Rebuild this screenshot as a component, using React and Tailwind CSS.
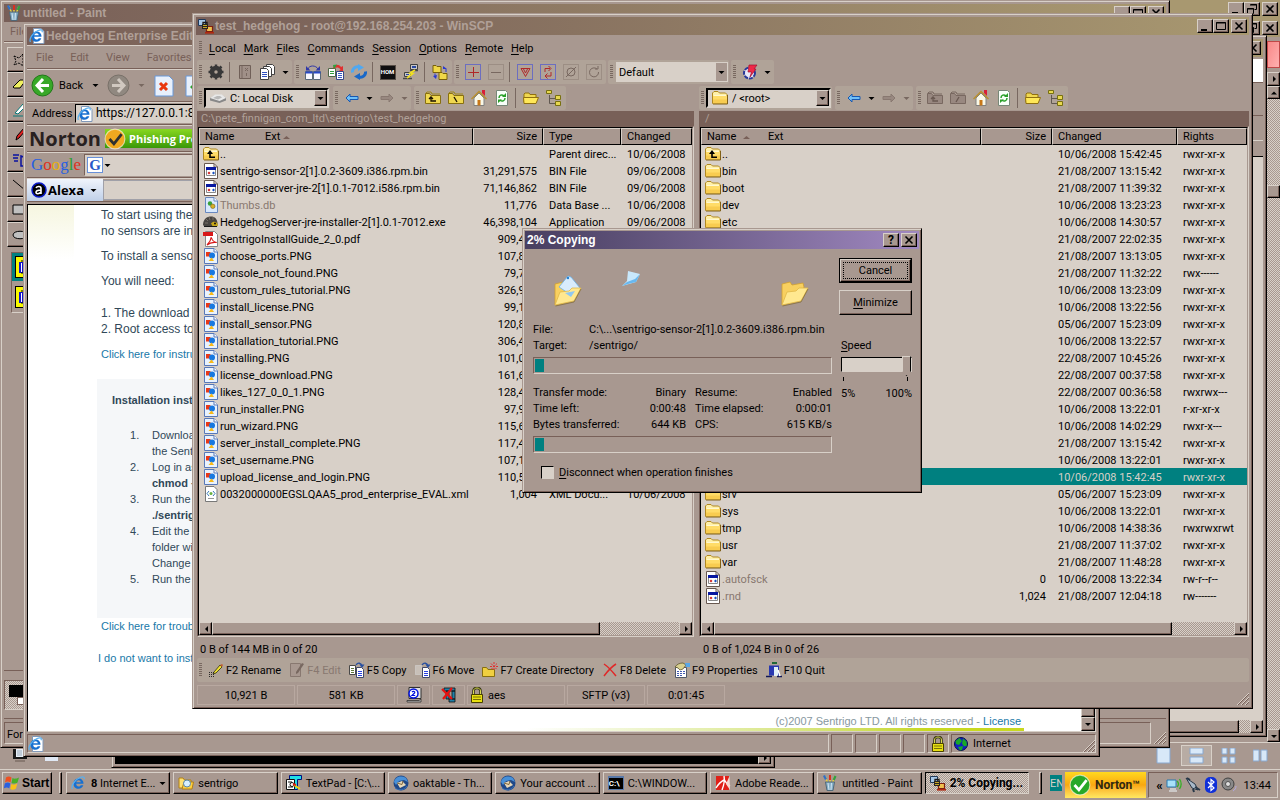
import { useState } from 'react'

// 共通のクラス
const raised =
  'border border-t-[#d8d0c8] border-l-[#d8d0c8] border-r-black border-b-black bg-[#a89890] shadow-[inset_-1px_-1px_#786058]'
const sunken = 'border border-t-[#786058] border-l-[#786058] border-r-[#d8d0c8] border-b-[#d8d0c8]'
const frame =
  'absolute flex flex-col border border-t-[#a89890] border-l-[#a89890] border-r-black border-b-black bg-[#a89890] shadow-[inset_1px_1px_#d8d0c8,inset_-1px_-1px_#786058]'
const checker =
  'bg-[repeating-conic-gradient(#d8d0c8_0_25%,#a89890_0_50%)] bg-[length:2px_2px]'

/* ---------- icons ---------- */

const I = ({ children, size = 16, box = 16, className = '' }) => (
  <svg
    width={size}
    height={size}
    viewBox={`0 0 ${box} ${box}`}
    className={`shrink-0 ${className}`}
    fill="none"
    aria-hidden="true"
  >
    {children}
  </svg>
)

const Folder = ({ up = false }) => (
  <I>
    <path d="M.5 13.500v-10.500l1.500-1.500h4l1.500 1.500h6l1.500 1.500v9z" fill="#fff0a8" stroke="#b08820" />
    <path d="M1 5.500h14v8H1z" fill="#ffdc68" />
    <path d="M1.500 5.500h12.500" stroke="#fff8d0" />
    <path d="M1 9.500h14v4H1z" fill="#f8cc50" />
    <path d="M1 14h14.500V5" stroke="#806018" />
    {up && <path d="M4 8l3-4 3 4H7.800v2.500H12V12H6.200V8z" fill="#000" />}
  </I>
)

const BinFile = () => (
  <I>
    <path d="M1.500.5h9.500l3.500 3.500v11.500h-13z" fill="#fff" stroke="#685850" />
    <path d="M11 .5V4h3.500" stroke="#685850" />
    <path d="M3.500 4.500h9v8h-9z" fill="#fff" stroke="#888" />
    <path d="M3 4h10v3H3z" fill="#0818a0" />
    <path d="M4.500 10L6 8.500 7.500 10 6 11.500z" fill="#d02020" />
    <path d="M9 10l1.500-1.500L12 10l-1.500 1.500z" fill="#1850c0" />
  </I>
)

const PngFile = () => (
  <I>
    <path d="M1.500.5h9.500l3.500 3.500v11.500h-13z" fill="#e8f2fe" stroke="#5878b8" />
    <path d="M11 .5V4h3.500" fill="#fff" stroke="#5878b8" />
    <path d="M3 4h4.500v4.500H3z" fill="#e83818" />
    <circle cx="9" cy="7.500" r="3" fill="#1878e0" />
    <path d="M5.500 13l3-3.500 2.500 3.500z" fill="#f8b818" />
  </I>
)

const DbFile = () => (
  <I>
    <path d="M2.500.5h8.500l3.500 3.500v11.500h-12z" fill="#d8e8fc" stroke="#6888c0" />
    <path d="M11 .5V4h3.500" fill="#fff" stroke="#6888c0" />
    <circle cx="7" cy="6.500" r="2.200" fill="#38a038" />
    <circle cx="9.800" cy="9.300" r="2.200" fill="#d8b028" stroke="#706020" strokeWidth=".6" />
  </I>
)

const Hedgehog = () => (
  <I>
    <path d="M0 11C0 5 4 2.500 8 2.500S14 5 14.500 9v3H1z" fill="#484440" />
    <path d="M3 5l2 2M6 3l1 3M10 3v3M2 9h3" stroke="#787068" />
    <path d="M8 9.500c2-3 6-2 7 1l-1 2.500h-4z" fill="#c8a818" />
    <circle cx="12" cy="9.500" r="1" fill="#181008" />
    <path d="M1 12.500h13" stroke="#181818" />
  </I>
)

const PdfFile = ({ size = 16 }) => (
  <I size={size}>
    <path d="M2.500.5h9l3 3v12h-12z" fill="#fff" stroke="#888" />
    <path d="M0 1h10v4H0z" fill="#d81818" />
    <path d="M4 14c2-2 4-5 4.300-8 .5 3 2.500 5 5.500 5.500-3-.5-7 0-9.800 2.500" stroke="#d81818" strokeWidth="1.200" />
  </I>
)

const XmlFile = () => (
  <I>
    <path d="M2.500.5h8.500l3 3v12h-11.500z" fill="#fff" stroke="#787878" />
    <path d="M6 5L4 7.500 6 10M10 5l2 2.500-2 2.500" stroke="#3878b8" />
    <circle cx="8" cy="7.500" r="1.500" fill="#68b040" />
    <path d="M5 12.500h6" stroke="#999" />
  </I>
)

const fileIcons = {
  up: <Folder up />,
  dir: <Folder />,
  bin: <BinFile />,
  png: <PngFile />,
  db: <DbFile />,
  exe: <Hedgehog />,
  pdf: <PdfFile />,
  xml: <XmlFile />,
}

const Ie = ({ size = 16, page = false }) => (
  <I size={size}>
    {page && <path d="M4.500.5h7.500l3 3v12H4.500z" fill="#fff" stroke="#8098b8" />}
    <path
      d="M12.500 8.800H5.200c.1 1.700 1 2.700 2.400 2.700 1 0 1.700-.4 2.100-1.200h2.600c-.7 2.300-2.500 3.400-4.800 3.400-3 0-5-2-5-5s2-5.200 5-5.200 5.100 2 5 5.300zM5.300 7.300h4.500c-.2-1.300-1-2-2.200-2s-2.100.7-2.300 2z"
      fill="#1870d0"
    />
    <path d="M1.500 14C-.5 11 4 4.500 9 2.500c3-1.200 5-.8 4 1.700" stroke="#58b0f0" strokeWidth="1.200" />
  </I>
)

const PaintCup = () => (
  <I>
    <path d="M3 1l3 8M8 0v8M13 1l-3 8" stroke="#e8d040" strokeWidth="1.500" />
    <path d="M2 .5l2 4" stroke="#3070c8" strokeWidth="2.200" />
    <path d="M8 0v5" stroke="#d83020" strokeWidth="2" />
    <path d="M13.500 1l-1.800 4" stroke="#30a040" strokeWidth="2.200" />
    <path d="M3.500 7h9l-1.500 8.500H5z" fill="#88b0c8" stroke="#506878" />
    <path d="M6 8l1 7M9.500 8L9 15" stroke="#d0e4f0" />
  </I>
)

const WinScpIcon = () => (
  <I>
    <path d="M.5 1.500h7v6h-7z" fill="#a8c8e8" stroke="#203858" />
    <path d="M8.500 8.500h6v5h-6z" fill="#f0c050" stroke="#802010" strokeWidth="1.200" />
    <path d="M7 14.800h9" stroke="#b02810" strokeWidth="1.600" />
    <path d="M4 6h6v5H4z" fill="#282420" />
    <path d="M5 6V4.500h4V6" stroke="#181818" strokeWidth="1.300" />
    <path d="M5 7.500h4M5 9.500h4" stroke="#c8a828" />
  </I>
)

const Gear = () => (
  <I>
    <circle cx="8" cy="8" r="4" stroke="#383838" strokeWidth="4.500" />
    <path d="M8 .5v3M8 12.500v3M.5 8h3M12.500 8h3M2.500 2.500l2 2M11.500 11.500l2 2M13.500 2.500l-2 2M4.500 11.500l-2 2" stroke="#383838" strokeWidth="2.500" />
  </I>
)

const Book = () => (
  <I>
    <path d="M2.500 1.500h11v13h-11z" fill="#a09088" stroke="#706058" />
    <path d="M5 2v12M8 4l3 3M8 7l3-3M9.500 9v3" stroke="#786860" />
  </I>
)

const Pages = () => (
  <I>
    <path d="M6.500.5h6l2 2v8h-8z" fill="#fff" stroke="#404040" />
    <path d="M3.500 2.500h6l2 2v8h-8z" fill="#fff" stroke="#404040" />
    <path d="M.5 4.500h6l2 2v9h-8z" fill="#fff" stroke="#404040" />
    <path d="M2 8.500h5M2 10.500h5M2 12.500h5" stroke="#3050c0" />
  </I>
)

const SyncPanels = () => (
  <I>
    <path d="M.5 7.500h7v8h-7zM8.500 7.500h7v8h-7z" fill="#f8f8ff" stroke="#586878" />
    <path d="M.5 8.500h7M8.500 8.500h7" stroke="#2848c8" strokeWidth="2" />
    <path d="M3 5c1-4 8-4 10 0" stroke="#3038a8" />
    <path d="M1 2v4.500h4.500zM15 2v4.500h-4.500z" fill="#3038a8" />
  </I>
)

const ComparePages = () => (
  <I>
    <path d="M.5 4.500h7v8h-7z" fill="#fff" stroke="#506848" />
    <path d="M8.500 7.500h7v8h-7z" fill="#fff" stroke="#384888" />
    <path d="M10 9.500h4M10 11.500h4M10 13.500h4" stroke="#3858c8" />
    <path d="M2 7.500h4M2 9.500h4" stroke="#30a040" />
    <path d="M5 3c2-3 6-3 8 0l2-1v5h-4l1.500-1.500C10.500 3 8 3 6 5z" fill="#e03030" />
    <path d="M5 1l4-.5L6 5z" fill="#28a840" />
  </I>
)

const RefreshArrows = () => (
  <I>
    <path d="M1.500 8.500C1 5 4 2 8 3" stroke="#50a8f0" strokeWidth="3" />
    <path d="M14.500 7.500C15 11 12 14 8 13" stroke="#1868c8" strokeWidth="3" />
    <path d="M7 0l6 3.500L7 7z" fill="#50a8f0" />
    <path d="M9 16l-6-3.500L9 9z" fill="#1868c8" />
  </I>
)

const Console = () => (
  <span className="flex h-[15px] w-4 items-center justify-center border border-[#585048] bg-[#101010] text-[6px] font-bold leading-[8px] text-white">
    HOM
  </span>
)

const Putty = () => (
  <I>
    <path d="M7.500.5h7v5h-7zM1.500 8.500h6v4h-6z" fill="#c8c8c8" stroke="#404040" />
    <path d="M9 2h4v2H9zM3 10h3v1H3z" fill="#2848a0" />
    <path d="M7 6.500h8M0 14.500h9" stroke="#484848" strokeWidth="1.500" />
    <path d="M12 6L7 9l3 .5L4 14" stroke="#f0e020" strokeWidth="1.600" />
  </I>
)

const FolderSync = () => (
  <I>
    <path d="M1 1.500h3l1 1h4v6H1zM7 8.500h3l1 1h4v6H7z" fill="#f0d848" stroke="#786008" />
    <path d="M11 2l4 3h-4zM5 11L1 12l3 3z" fill="#2838d0" />
    <path d="M14 5v3M3 12V9.500" stroke="#2838d0" />
  </I>
)

const Dotted = ({ d, dim = false }) => (
  <I>
    <path d="M.5.5h15v15H.5z" stroke={dim ? '#887870' : '#2838e8'} strokeDasharray="1 1" />
    <path d={d} stroke={dim ? '#786860' : '#b02828'} />
  </I>
)

const BlueArrow = ({ right = false, dim = false }) => (
  <I className={right ? 'rotate-180' : ''}>
    <path
      d="M2 8l4-4v2.500h8v3H6V12z"
      fill={dim ? '#988880' : '#70c0f8'}
      stroke={dim ? '#887870' : '#1858b0'}
    />
  </I>
)

const ToolFolder = ({ d, dim = false }) => (
  <I>
    <path
      d="M.5 13.500v-10h4l1.500 2h9.500v8z"
      fill={dim ? '#988880' : '#f0d850'}
      stroke={dim ? '#786860' : '#887010'}
    />
    <path d="M1 3l1-1h4l1 2h8" stroke={dim ? '#786860' : '#a08818'} />
    <path d={d} stroke={dim ? '#685850' : '#181000'} strokeWidth="1.300" />
  </I>
)

const House = () => (
  <I>
    <path d="M3 8v7.500h10V8L8 3z" fill="#f8f8e8" stroke="#808080" />
    <path d="M.5 9L8 1.500 15.500 9" stroke="#b89030" strokeWidth="1.500" />
    <path d="M11 0h3v6l-3-3z" fill="#d82038" />
    <path d="M6.500 10h3v5.500h-3z" fill="#c87818" />
  </I>
)

const RefreshPage = () => (
  <I>
    <path d="M2.500.5h9l2 2v13h-11z" fill="#f8fff8" stroke="#788878" />
    <path d="M5 8c0-3 3-4 5-2M11 8c0 3-3 4-5 2" stroke="#28a028" strokeWidth="1.500" />
    <path d="M8 7h4V3zM8 9.500H4V13z" fill="#28a028" />
  </I>
)

const OpenFolder = () => (
  <I>
    <path d="M1 12V4l1-1h4l1 1.500h6V7" fill="#f0d850" stroke="#907010" />
    <path d="M1 13.500l-.5-6h15l-2.500 6z" fill="#ffe858" stroke="#907010" />
  </I>
)

const Tree = () => (
  <I>
    <path d="M3.500 5v8.500H9M3.500 8.500H9" stroke="#605850" />
    <path d="M.5.5h5v3h-5zM9.500 5.500h5v4h-5zM9.500 11.500h5v4h-5z" fill="#e8d850" stroke="#787010" />
  </I>
)

const Bolt = () => (
  <I>
    <circle cx="7.500" cy="9" r="5.500" fill="#e8e8f8" stroke="#283898" strokeWidth="2" strokeDasharray="4 1" />
    <path d="M7 1h8l-3 4h2l-6 8 1.500-5H6z" fill="#f02848" stroke="#a01030" strokeWidth=".7" />
  </I>
)

const Drive = () => (
  <I>
    <path d="M0 8l5-3h7l4 3v2.500L9.500 13 0 10.500z" fill="#888" />
    <path d="M0 8l5-3.500h7L16 8l-6.500 3z" fill="#e8e8e8" />
    <path d="M3 8l4-2h3l2 1.500-4 2z" fill="#b8b8b8" />
  </I>
)

const Pencil = () => (
  <I>
    <path d="M6 10l6-7 2 2-6 6-3 1z" fill="#f0e030" stroke="#303010" strokeWidth=".8" />
    <path d="M12 3l2 2 1-2-1-1z" fill="#c06030" />
    <path d="M1 10.500h5M1 12.500h5M1 14.500h5" stroke="#282828" strokeDasharray="1 1" />
  </I>
)

const EditDim = () => (
  <I>
    <path d="M1.500 1.500h10v13h-10z" fill="#a89890" stroke="#887870" />
    <path d="M7 10l6-9 2 1-6 9-2 1z" fill="#786860" />
  </I>
)

const CopyPages = ({ move = false }) => (
  <I>
    <path
      d="M.5 3.500h6v9h-6z"
      fill={move ? '#c8c0b8' : '#fff'}
      stroke={move ? '#d8d8d8' : '#484848'}
      strokeDasharray={move ? '1 1' : 'none'}
    />
    {!move && <path d="M2 6.500h3M2 8.500h3M2 10.500h3" stroke="#607838" />}
    <path d="M7.500 5.500h5l2 2v8h-7z" fill="#fff" stroke="#404868" />
    <path d="M9 9.500h4M9 11.500h4M9 13.500h4" stroke="#2840e0" />
    <path d="M7 3c2-3 5-2 6 1" stroke="#2850a0" strokeWidth="1.300" />
    <path d="M10.500 2.500h5L13 6z" fill="#2850a0" />
  </I>
)

const NewFolder = () => (
  <I>
    <path d="M.5 14.500v-9h4l1.500 2h6.500v7z" fill="#f0d040" stroke="#887010" />
    <path d="M12 0v9M8 4.500h8M9 1.500l6 6M15 1.500l-6 6" stroke="#e03030" strokeDasharray="2 1" />
  </I>
)

const RedCross = () => (
  <I>
    <path d="M2 2c3 2 8 7 12 12M14 2C9 5 5 10 2 14" stroke="#e02828" strokeWidth="1.500" />
  </I>
)

const Props = () => (
  <I>
    <path d="M1.500 5.500h11v10h-11z" fill="#fff" stroke="#505868" />
    <path d="M3 9.500h8M3 11.500h8M3 13.500h5" stroke="#4058b0" strokeDasharray="2 1" />
    <path d="M1 5c2-3 5-4 8-4l3 2-3 4-3 1-2-2z" fill="#d8d090" stroke="#504820" strokeWidth=".7" />
    <path d="M11 1h5v4h-4z" fill="#58a8e8" />
  </I>
)

const Door = () => (
  <I>
    <path d="M3 3.500h10v10H3z" fill="#2838b0" />
    <path d="M8 5h4v9H8z" fill="#e0f0f8" />
    <path d="M6 1h5" stroke="#206838" strokeWidth="2" />
    <path d="M0 14.500h6M11 14.500h5" stroke="#101858" strokeWidth="1.500" />
    <path d="M12 8l2 6" stroke="#fff" strokeWidth="1.500" />
  </I>
)

const Monitor = () => (
  <I>
    <path d="M3 .5h11l1 1v10H3z" fill="#e0e0e0" stroke="#303030" />
    <path d="M1 13.500h12l2-1.500v3H1z" fill="#c0c0c0" stroke="#303030" strokeWidth=".8" />
    <circle cx="7.500" cy="6.500" r="4.500" fill="#fff" stroke="#0010e0" strokeWidth="1.500" />
    <path d="M6 5c1-1.200 3-.8 2.800.7L6 8.500h3.200" stroke="#0010e0" strokeWidth="1.200" />
  </I>
)

const Compression = () => (
  <I>
    <path d="M3 1h11v3H3zM5 4h3v8H5zM11 4h3v8h-3zM8 12h6v3H8z" fill="#2080a8" stroke="#101010" strokeWidth=".8" />
    <path d="M1 2l10 10M11 1L2 12" stroke="#e81010" strokeWidth="2.200" />
  </I>
)

const Lock = () => (
  <I>
    <path d="M4.500 8V4c0-4 7-4 7 0v4" stroke="#303010" strokeWidth="2.500" />
    <path d="M4.500 8V4c0-4 7-4 7 0v4" stroke="#d8d850" />
    <path d="M2.500 7.500h11v8h-11z" fill="#e8e010" stroke="#484000" />
    <path d="M4 10h8M4 12.500h8" stroke="#787008" />
  </I>
)

const Globe = () => (
  <I>
    <circle cx="8" cy="8" r="6.500" fill="#1020c0" stroke="#081048" />
    <path d="M2.500 5l4-3 2.500 3-3 4-3-1zM10 2.500l3.500 3 .5 4-3 1-2-3zM5 11l5-1-1 4-2 .5z" fill="#18a828" />
  </I>
)

const Flag = () => (
  <I>
    <path d="M2 2.500C4 1 6 1.500 7.500 2.500L6.500 7.500C5 6.500 3 6 1 7.500z" fill="#f05020" />
    <path d="M8.500 3C10 4 12 4 15 2.500l-1.500 5C12 8.500 9.500 9 7.500 8z" fill="#48b028" />
    <path d="M.8 8.500C3 7 5 7.500 6.300 8.500l-1 5C4 12.500 2 12-.2 13.500z" fill="#2860e0" />
    <path d="M7.300 9c2 1 4 .8 6-.5l-1.300 5c-2 1.500-4 1.500-5.700.5z" fill="#f8c018" />
  </I>
)

const TextPadIcon = () => (
  <I>
    <path d="M3.500.5h12v4h-4v10h-4v-10h-4z" fill="#20e0e8" stroke="#001080" />
    <path d="M.5 4.500h8v10h-8z" fill="#fff" stroke="#101010" />
    <path d="M2 7h4M2 12h5" stroke="#181818" />
    <circle cx="6" cy="9.500" r="2" stroke="#101010" />
    <path d="M8 10l6 4" stroke="#f0d010" strokeWidth="2" />
    <path d="M7 9l3 1" stroke="#e02010" strokeWidth="2" />
  </I>
)

const Thunderbird = () => (
  <I>
    <circle cx="8" cy="8" r="7.500" fill="#204888" />
    <path d="M1 7C2 2 8 0 13 3l2 4-4-2-5 1-3 4z" fill="#4890d8" />
    <path d="M4 8l5-2 4 4-6 3z" fill="#e8d8b8" />
    <path d="M4 8l5 1.500L10 6" stroke="#806840" />
    <path d="M2 13c4 3 10 2 12-2" stroke="#3870b8" />
  </I>
)

const Cmd = () => (
  <span className="flex h-[14px] w-4 shrink-0 items-center border border-t-2 border-[#5878a8] bg-black text-[8px] font-bold leading-[9px] text-white">
    C:\
  </span>
)

const Adobe = () => (
  <I>
    <path d="M1 1h13v14H1z" fill="#e02018" />
    <path d="M9 1c1 5 0 9-2 14M9 4c2 4 4 6 6 7M1 13c3-5 6-7 8-8" stroke="#fff" strokeWidth="1.400" />
    <path d="M14.500 1l.5 14-4-6z" fill="#f8d8d0" />
  </I>
)

const ExplorerIcon = () => (
  <I>
    <path d="M1 13V3h4l1.500 2H13v8z" fill="#ffe070" stroke="#b08018" />
    <path d="M4 14l2-7h9.500L14 14z" fill="#ffd040" stroke="#b08018" />
    <circle cx="9" cy="8.500" r="3.500" fill="#d8f0ff" stroke="#5888a8" />
  </I>
)

const Tick = ({ fill, stroke = '#fff', size = 20 }) => (
  <I size={size} box={20}>
    <circle cx="10" cy="10" r="9" fill={fill} stroke="#fff" strokeOpacity=".6" />
    <path d="M5 10l4 4.500L16 5.500" stroke={stroke} strokeWidth="2.500" />
  </I>
)

const Caret = ({ dim = false }) => (
  <I size={7} box={7}>
    <path d="M.5 2h6L3.500 5z" fill={dim ? '#786860' : '#000'} />
  </I>
)

const glyphs = {
  min: <path d="M2 9h6v2H2z" fill="#000" />,
  max: <path d="M1.500 2.500h9v7h-9zM1 3h10" stroke="#000" />,
  restore: <path d="M4.500 1.500h6v5h-2M4 2h7M1.500 5.500h6v5h-6zM1 6h7" stroke="#000" />,
  close: <path d="M2.500 2.500l7 7M9.500 2.500l-7 7" stroke="#000" strokeWidth="1.600" />,
}

const arrows = {
  left: 'M6 1v6L3 4z',
  right: 'M3 1v6l3-3z',
  up: 'M1 5.500h6l-3-3z',
  down: 'M1 3h6L4 6z',
}

/* ---------- building blocks ---------- */

const CaptionButton = ({ kind }) => (
  <button
    type="button"
    aria-label={kind}
    className={`flex h-[14px] w-4 shrink-0 items-center justify-center text-[12px] font-bold leading-none ${raised}`}
  >
    {kind === 'help' ? '?' : <I size={12} box={12}>{glyphs[kind]}</I>}
  </button>
)

const CaptionButtons = ({ middle = 'max' }) => (
  <div className="flex shrink-0">
    <CaptionButton kind="min" />
    <CaptionButton kind={middle} />
    <span className="w-[2px]" />
    <CaptionButton kind="close" />
  </div>
)

const TitleBar = ({ icon, children, middle }) => (
  <header className="flex h-[18px] shrink-0 items-center bg-linear-to-r from-[#785f58] to-[#a89870] pr-[2px] pl-[2px]">
    {icon}
    <h2 className="min-w-0 flex-1 truncate pl-px font-['Liberation_Sans',Arial,sans-serif] text-[12px] leading-[16px] font-bold text-[#b0a098]">
      {children}
    </h2>
    <CaptionButtons middle={middle} />
  </header>
)

const ArrowButton = ({ dir, className = 'h-[13px] w-[13px]' }) => (
  <button
    type="button"
    aria-label={dir}
    className={`flex shrink-0 items-center justify-center ${raised} ${className}`}
  >
    <I size={8} box={8}>
      <path d={arrows[dir]} fill="#000" />
    </I>
  </button>
)

const HScroll = ({ thumb }) => (
  <div className={`flex h-[13px] shrink-0 ${checker}`}>
    <ArrowButton dir="left" />
    <div className="flex min-w-0 flex-1">
      <div className={raised} style={{ width: `${thumb}%` }} />
    </div>
    <ArrowButton dir="right" />
  </div>
)

const Grip = () => (
  <span className="mr-[2px] ml-[2px] h-[14px] w-[3px] shrink-0 bg-[repeating-linear-gradient(#786860_0_1px,transparent_1px_2px)]" />
)

const Segment = ({ children }) => (
  <div className="flex h-6 shrink-0 items-center rounded-[2px] bg-[#b0a398] pr-px">
    <Grip />
    {children}
  </div>
)

const Tool = ({ label, children }) => (
  <button type="button" aria-label={label} className="flex h-[22px] w-[23px] items-center justify-center">
    {children}
  </button>
)

const Drop = ({ dim = false }) => (
  <button type="button" aria-label="More" className="flex h-[22px] w-3 items-center justify-center">
    <Caret dim={dim} />
  </button>
)

const Sep = () => <span className="mx-[2px] h-[20px] w-[2px] border-l border-[#786860]" />

const Combo = ({ label, icon, text }) => (
  <label className="relative flex h-[20px] w-[125px] items-center border-2 border-t-black border-l-black border-r-[#d8d0c8] border-b-[#d8d0c8] bg-[#d8d0c8] pl-1">
    {icon}
    <select aria-label={label} className="h-4 min-w-0 flex-1 appearance-none bg-transparent pl-1 text-black outline-none">
      <option>{text}</option>
    </select>
    <span className={`pointer-events-none flex h-4 w-[13px] items-center justify-center ${raised}`}>
      <Caret />
    </span>
  </label>
)

/* ---------- WinSCP ---------- */

const png = (name, size) => ['png', `${name}.PNG`, size, '', '']

const localFiles = [
  ['up', '..', '', 'Parent direc...', '10/06/2008'],
  ['bin', 'sentrigo-sensor-2[1].0.2-3609.i386.rpm.bin', '31,291,575', 'BIN File', '09/06/2008'],
  ['bin', 'sentrigo-server-jre-2[1].0.1-7012.i586.rpm.bin', '71,146,862', 'BIN File', '09/06/2008'],
  ['db', 'Thumbs.db', '11,776', 'Data Base ...', '10/06/2008'],
  ['exe', 'HedgehogServer-jre-installer-2[1].0.1-7012.exe', '46,398,104', 'Application', '09/06/2008'],
  ['pdf', 'SentrigoInstallGuide_2_0.pdf', '909,412', '', ''],
  png('choose_ports', '107,812'),
  png('console_not_found', '79,702'),
  png('custom_rules_tutorial', '326,910'),
  png('install_license', '99,120'),
  png('install_sensor', '120,834'),
  png('installation_tutorial', '306,420'),
  png('installing', '101,012'),
  png('license_download', '161,604'),
  png('likes_127_0_0_1', '128,440'),
  png('run_installer', '97,904'),
  png('run_wizard', '115,602'),
  png('server_install_complete', '117,408'),
  png('set_username', '107,110'),
  png('upload_license_and_login', '110,520'),
  ['xml', '0032000000EGSLQAA5_prod_enterprise_EVAL.xml', '1,004', 'XML Docu...', '10/06/2008'],
]

const rx = 'rwxr-xr-x'
const remoteFiles = [
  ['up', '..', '', '10/06/2008 15:42:45', rx],
  ['dir', 'bin', '', '21/08/2007 13:15:42', rx],
  ['dir', 'boot', '', '21/08/2007 11:39:32', rx],
  ['dir', 'dev', '', '10/06/2008 13:23:23', rx],
  ['dir', 'etc', '', '10/06/2008 14:30:57', rx],
  ['dir', '', '', '21/08/2007 22:02:35', rx],
  ['dir', '', '', '21/08/2007 13:13:05', rx],
  ['dir', '', '', '21/08/2007 11:32:22', 'rwx------'],
  ['dir', '', '', '10/06/2008 13:23:09', rx],
  ['dir', '', '', '10/06/2008 13:22:56', rx],
  ['dir', '', '', '05/06/2007 15:23:09', rx],
  ['dir', '', '', '10/06/2008 13:22:57', rx],
  ['dir', '', '', '22/08/2007 10:45:26', rx],
  ['dir', '', '', '22/08/2007 00:37:58', rx],
  ['dir', '', '', '22/08/2007 00:36:58', 'rwxrwx---'],
  ['dir', '', '', '10/06/2008 13:22:01', 'r-xr-xr-x'],
  ['dir', '', '', '10/06/2008 14:02:29', 'rwxr-x---'],
  ['dir', '', '', '21/08/2007 13:15:42', rx],
  ['dir', '', '', '10/06/2008 13:22:01', rx],
  ['dir', '', '', '10/06/2008 15:42:45', rx],
  ['dir', 'srv', '', '05/06/2007 15:23:09', rx],
  ['dir', 'sys', '', '10/06/2008 13:22:01', rx],
  ['dir', 'tmp', '', '10/06/2008 14:38:36', 'rwxrwxrwt'],
  ['dir', 'usr', '', '21/08/2007 11:37:02', rx],
  ['dir', 'var', '', '21/08/2007 11:48:28', rx],
  ['bin', '.autofsck', '0', '10/06/2008 13:22:34', 'rw-r--r--'],
  ['bin', '.rnd', '1,024', '21/08/2007 12:04:18', 'rw-------'],
]

const dimmed = ['Thumbs.db', '.autofsck', '.rnd']

const th =
  'h-[17px] truncate border border-t-[#d8d0c8] border-l-[#d8d0c8] border-r-black border-b-black bg-[#a89890] px-[5px] text-left font-normal'

const SortMark = () => (
  <I size={7} box={7} className="inline">
    <path d="M0 5h7L3.500 2z" fill="#786058" />
  </I>
)

function FileTable({ files, columns, ext, selected, thumb }) {
  return (
    <div className="flex min-h-0 flex-1 flex-col border border-t-[#786058] border-l-[#786058] border-r-[#d8d0c8] border-b-[#d8d0c8]">
      <div className="flex min-h-0 flex-1 flex-col border border-t-black border-l-black border-r-[#a89890] border-b-[#a89890] bg-[#d8d0c8]">
        <div className="min-h-0 flex-1 overflow-hidden">
          <table className="w-full table-fixed border-separate border-spacing-0">
            <thead>
              <tr>
                <th className={th}>
                  <span className={`inline-block ${ext ? 'w-[60px]' : 'w-[36px]'}`}>Name</span>
                  {ext ? 'Ext ' : ''}
                  <SortMark />
                  {ext ? '' : <span className="pl-[18px]">Ext</span>}
                </th>
                {columns.map(([name, width, right]) => (
                  <th key={name} className={`${th} ${width} ${right ? '!text-right' : ''}`}>
                    {name}
                  </th>
                ))}
              </tr>
            </thead>
            <tbody>
              {files.map(([icon, name, ...cells], row) => (
                <tr key={row} className={row === selected ? 'bg-[#008080] text-[#d8d0c8]' : ''}>
                  <td className="h-[17px] p-0">
                    <div className="flex h-[17px] items-center gap-px pl-1 whitespace-nowrap">
                      {fileIcons[icon]}
                      <span className={`pt-px ${dimmed.includes(name) ? 'text-[#887870]' : ''}`}>{name}</span>
                    </div>
                  </td>
                  {cells.map((cell, i) => (
                    <td
                      key={i}
                      className={`h-[17px] overflow-hidden px-[6px] pt-px pb-0 whitespace-nowrap ${i === 0 ? 'text-right' : ''}`}
                    >
                      {cell}
                    </td>
                  ))}
                </tr>
              ))}
            </tbody>
          </table>
        </div>
        <HScroll thumb={thumb} />
      </div>
    </div>
  )
}

function NavTools({ label, icon, text, dim = false }) {
  return (
    <div className="flex h-6 shrink-0 gap-[3px]">
      <Segment>
        <Combo label={label} icon={icon} text={text} />
      </Segment>
      <Segment>
        <Tool label="Back"><BlueArrow /></Tool>
        <Drop />
        <Tool label="Forward"><BlueArrow right dim /></Tool>
        <Drop dim />
      </Segment>
      <Segment>
        <Tool label="Parent directory"><ToolFolder dim={dim} d="M4 9l2-2 2 2M6 7v4h5" /></Tool>
        <Tool label="Root directory"><ToolFolder dim={dim} d={dim ? 'M9 7l-3 5' : 'M6 7l3 5'} /></Tool>
        <Tool label="Home directory"><House /></Tool>
        <Tool label="Refresh"><RefreshPage /></Tool>
        <Sep />
        <Tool label="Open directory"><OpenFolder /></Tool>
        <Tool label="Tree"><Tree /></Tool>
      </Segment>
    </div>
  )
}

const menus = ['Local', 'Mark', 'Files', 'Commands', 'Session', 'Options', 'Remote', 'Help']

const keys = [
  ['F2 Rename', <Pencil />],
  ['F4 Edit', <EditDim />],
  ['F5 Copy', <CopyPages />],
  ['F6 Move', <CopyPages move />],
  ['F7 Create Directory', <NewFolder />],
  ['F8 Delete', <RedCross />],
  ['F9 Properties', <Props />],
  ['F10 Quit', <Door />],
]

const panel = 'flex h-5 items-center justify-center border border-[#b8a8a0]'

const SizeGrip = () => (
  <I size={13} box={13} className="self-end">
    <path d="M1 13L13 1M5 13l8-8M9 13l4-4" stroke="#d8d0c8" />
    <path d="M2 13L13 2M6 13l7-7M10 13l3-3" stroke="#786058" />
  </I>
)

function WinScp() {
  return (
    <section className={`${frame} top-[13px] right-[27px] bottom-[91px] left-[192px] p-[3px]`}>
      <TitleBar icon={<WinScpIcon />}>test_hedgehog - root@192.168.254.203 - WinSCP</TitleBar>
      <div className="flex min-h-0 flex-1 flex-col pl-px">
        <nav className="mt-px flex h-6 shrink-0 items-center">
          <Grip />
          {menus.map((m) => (
            <button key={m} type="button" className="pr-[3px] pl-[5px]">
              <span className="underline underline-offset-2">{m[0]}</span>
              {m.slice(1)}
            </button>
          ))}
        </nav>
        <div className="mb-[2px] flex h-6 shrink-0 gap-[2px]">
          <Segment>
            <Tool label="Preferences"><Gear /></Tool>
            <Sep />
            <Tool label="Bookmarks"><Book /></Tool>
            <Tool label="Queue"><Pages /></Tool>
            <Drop />
          </Segment>
          <Segment>
            <Tool label="Synchronize browsing"><SyncPanels /></Tool>
            <Tool label="Compare directories"><ComparePages /></Tool>
            <Tool label="Synchronize"><RefreshArrows /></Tool>
            <Sep />
            <Tool label="Console"><Console /></Tool>
            <Tool label="Open in PuTTY"><Putty /></Tool>
            <Sep />
            <Tool label="Keep up to date"><FolderSync /></Tool>
          </Segment>
          <Segment>
            <Tool label="Select"><Dotted d="M8.500 3v10M3 8.500h11" /></Tool>
            <Tool label="Unselect"><Dotted dim d="M3 8.500h10" /></Tool>
            <Sep />
            <Tool label="Select all"><Dotted d="M4 4.500h9l-4.500 8zM6.500 5l2 4 2-4" /></Tool>
            <Tool label="Invert selection"><Dotted d="M5 8V4.500h5M8.500 2L11 4.500 8.500 7M11 8v4H6M7.500 9.500L5 12l2.500 2.500" /></Tool>
            <Tool label="Clear selection"><Dotted dim d="M4 8a4 4 0 108 0 4 4 0 10-8 0M3 13L13 3" /></Tool>
            <Tool label="Restore selection"><Dotted dim d="M11 5a4.500 4.500 0 101.500 3M9 5h3V2" /></Tool>
          </Segment>
          <Segment>
            <label className="ml-px flex h-5 w-[112px] items-center border border-[#d8d0c8] bg-[#d8d0c8]">
              <select aria-label="Transfer preset" className="h-4 min-w-0 flex-1 appearance-none bg-transparent pl-[2px] outline-none">
                <option>Default</option>
              </select>
              <span className="pointer-events-none flex h-[18px] w-[11px] items-center justify-center bg-[#a89890]">
                <Caret />
              </span>
            </label>
          </Segment>
          <Segment>
            <Tool label="Sessions"><Bolt /></Tool>
            <Drop />
          </Segment>
        </div>

        <div className="flex min-h-0 flex-1 gap-[5px]">
          <div className="flex min-w-0 flex-[497] flex-col">
            <NavTools label="Local drive" icon={<Drive />} text="C: Local Disk" />
            <p className="mt-px h-[15px] shrink-0 truncate bg-[#786058] pl-1 leading-[15px] text-[#b0a098]">
              C:\pete_finnigan_com_ltd\sentrigo\test_hedgehog
            </p>
            <FileTable
              files={localFiles}
              ext
              thumb={83}
              columns={[
                ['Size', 'w-[70px]', true],
                ['Type', 'w-[78px]'],
                ['Changed', 'w-[71px]'],
              ]}
            />
            <p className="h-[21px] shrink-0 pt-[6px] pl-[3px]">0 B of 144 MB in 0 of 20</p>
          </div>
          <div className="flex min-w-0 flex-[550] flex-col">
            <NavTools label="Remote directory" icon={<Folder />} text="/ <root>" dim />
            <p className="mt-px h-[15px] shrink-0 truncate bg-[#786058] pl-[6px] leading-[15px] text-[#b0a098]">/</p>
            <FileTable
              files={remoteFiles}
              selected={19}
              thumb={88}
              columns={[
                ['Size', 'w-[71px]', true],
                ['Changed', 'w-[125px]'],
                ['Rights', 'w-[70px]'],
              ]}
            />
            <p className="h-[21px] shrink-0 pt-[6px] pl-1">0 B of 1,024 B in 0 of 26</p>
          </div>
        </div>

        <div className="flex h-6 shrink-0 items-center rounded-[2px] bg-[#b0a398]">
          <Grip />
          {keys.map(([text, icon]) => (
            <button
              key={text}
              type="button"
              disabled={text === 'F4 Edit'}
              className="flex items-center gap-[2px] px-1 whitespace-nowrap disabled:text-[#887870]"
            >
              {icon}
              {text}
            </button>
          ))}
        </div>
        <footer className="mt-[3px] flex h-5 shrink-0 gap-[2px]">
          <span className={`${panel} w-[98px]`}>10,921 B</span>
          <span className={`${panel} w-[98px]`}>581 KB</span>
          <span className={`${panel} w-[33px]`}><Monitor /></span>
          <span className={`${panel} w-[33px]`}><Compression /></span>
          <span className={`${panel} w-[98px] !justify-start gap-[3px] pl-px`}><Lock />aes</span>
          <span className={`${panel} w-[78px]`}>SFTP (v3)</span>
          <span className={`${panel} w-[78px]`}>0:01:45</span>
          <span className="flex-1" />
          <SizeGrip />
        </footer>
      </div>
    </section>
  )
}

/* ---------- copy dialog ---------- */

const BigFolder = ({ sheet = false }) => (
  <svg width="28" height="32" viewBox="0 0 28 32" className="shrink-0" fill="none" aria-hidden="true">
    <path d="M1 30V9l8-2 2 3 11-2 1 4-5 14z" fill="#f8d060" stroke="#d0a030" strokeWidth=".8" />
    {sheet && <path d="M5 12l9-11 3 1 9 11-6 9z" fill="#d8ecfc" stroke="#68b0e8" strokeWidth=".8" />}
    {sheet && <circle cx="14" cy="3" r="1.200" fill="#2880d0" />}
    <path d="M1 30l5-13 9-1 3-3 9 0-7 13z" fill="#ffe890" stroke="#e0b848" strokeWidth=".8" />
    <path d="M1.500 31l18.500-4 7-13" stroke="#806830" strokeOpacity=".7" />
    {sheet && <path d="M11 18l10-2-4 6z" fill="#90c8f0" />}
  </svg>
)

const Progress = ({ label, value }) => (
  <div role="progressbar" aria-label={label} aria-valuenow={value} className={`h-[17px] p-px ${sunken}`}>
    <div className="h-[13px] bg-[#008080]" style={{ width: `${value + 1}%` }} />
  </div>
)

function CopyDialog() {
  const [disconnect, setDisconnect] = useState(false)
  const [speed, setSpeed] = useState(100)

  return (
    <section role="dialog" aria-label="2% Copying" className={`${frame} top-[228px] left-[522px] w-[400px] p-[2px]`}>
      <header className="flex h-[18px] items-center bg-linear-to-r from-[#483f60] to-[#a088c0] px-[2px]">
        <h2 className="flex-1 font-['Liberation_Sans',Arial,sans-serif] text-[12px] leading-4 font-bold text-white">2% Copying</h2>
        <CaptionButton kind="help" />
        <span className="w-[2px]" />
        <CaptionButton kind="close" />
      </header>
      <div className="flex gap-[7px] pt-[9px] pr-[7px] pb-[11px] pl-2">
        <div className="min-w-0 flex-1">
          <div className="flex h-[64px] items-start pt-[17px] pl-[21px]">
            <BigFolder sheet />
            <svg width="20" height="18" viewBox="0 0 20 18" className="-mt-1 ml-[39px]" aria-hidden="true">
              <path d="M7 0l12 3-4 8-14 4 5-5z" fill="#c8e8fc" />
              <path d="M1 15l6-2 8-2 4-8-5 5-8 3z" fill="#68b8f0" />
            </svg>
            <span className="flex-1" />
            <span className="mr-[23px]"><BigFolder /></span>
          </div>
          <dl className="grid grid-cols-[56px_1fr] leading-4">
            <dt>File:</dt>
            <dd>C:\...\sentrigo-sensor-2[1].0.2-3609.i386.rpm.bin</dd>
            <dt>Target:</dt>
            <dd>/sentrigo/</dd>
          </dl>
          <div className="mt-[3px]">
            <Progress label="File progress" value={2} />
          </div>
          <dl className="mt-[11px] mb-[3px] grid grid-cols-[93px_69px_74px_1fr] leading-4 [&>dd]:text-right">
            <dt>Transfer mode:</dt>
            <dd className="pr-[9px]">Binary</dd>
            <dt>Resume:</dt>
            <dd>Enabled</dd>
            <dt>Time left:</dt>
            <dd className="pr-[9px]">0:00:48</dd>
            <dt>Time elapsed:</dt>
            <dd>0:00:01</dd>
            <dt>Bytes transferred:</dt>
            <dd className="pr-[9px]">644 KB</dd>
            <dt>CPS:</dt>
            <dd>615 KB/s</dd>
          </dl>
          <Progress label="Total progress" value={2} />
          <label className="mt-[13px] flex items-center gap-[5px] pl-2">
            <input
              type="checkbox"
              checked={disconnect}
              onChange={(e) => setDisconnect(e.target.checked)}
              className="h-[13px] w-[13px] appearance-none border border-t-black border-l-black border-r-[#d8d0c8] border-b-[#d8d0c8] bg-[#d8d0c8] checked:bg-[#008080]"
            />
            <span>
              <span className="underline underline-offset-2">D</span>isconnect when operation finishes
            </span>
          </label>
        </div>
        <div className="w-[73px] shrink-0">
          <button type="button" className="flex h-[25px] w-full border border-black p-0">
            <span className={`flex h-full w-full items-center justify-center ${raised} p-[2px]`}>
              <span className="flex h-full w-full items-center justify-center border border-dotted border-black">
                Cancel
              </span>
            </span>
          </button>
          <button type="button" className={`mt-[7px] h-[25px] w-full ${raised}`}>
            <span className="underline underline-offset-2">M</span>inimize
          </button>
          <label className="mt-[23px] block pl-[2px] leading-4">
            <span className="underline underline-offset-2">S</span>peed
            <input
              type="range"
              min="5"
              max="100"
              value={speed}
              onChange={(e) => setSpeed(Number(e.target.value))}
              className="mt-[3px] block h-[15px] w-full appearance-none bg-transparent [&::-webkit-slider-runnable-track]:h-[15px] [&::-webkit-slider-runnable-track]:border [&::-webkit-slider-runnable-track]:border-t-black [&::-webkit-slider-runnable-track]:border-l-black [&::-webkit-slider-runnable-track]:border-r-[#d8d0c8] [&::-webkit-slider-runnable-track]:border-b-[#d8d0c8] [&::-webkit-slider-runnable-track]:bg-[#d8d0c8] [&::-webkit-slider-thumb]:-mt-[2px] [&::-webkit-slider-thumb]:h-5 [&::-webkit-slider-thumb]:w-[9px] [&::-webkit-slider-thumb]:appearance-none [&::-webkit-slider-thumb]:border [&::-webkit-slider-thumb]:border-t-[#d8d0c8] [&::-webkit-slider-thumb]:border-l-[#d8d0c8] [&::-webkit-slider-thumb]:border-r-black [&::-webkit-slider-thumb]:border-b-black [&::-webkit-slider-thumb]:bg-[#a89890] [&::-webkit-slider-thumb]:[clip-path:polygon(0_0,100%_0,100%_75%,50%_100%,0_75%)]"
            />
          </label>
          <div className="mt-[5px] flex justify-between px-1">
            <span className="h-1 w-px bg-black" />
            <span className="h-1 w-px bg-black" />
          </div>
          <div className="flex justify-between pt-[5px] pl-[2px] leading-4">
            <span>5%</span>
            <span>100%</span>
          </div>
        </div>
      </div>
    </section>
  )
}

/* ---------- Internet Explorer ---------- */

const bar = 'flex shrink-0 items-center border-t border-b border-t-[#d8d0c8] border-b-[#786058]'

const steps = [
  ['Download and install', 'the Sentrigo sensor'],
  ['Log in as root and run', <b>chmod +x</b>],
  ['Run the installer', <b>./sentrigo-sensor</b>],
  ['Edit the "sensor" file in', 'folder with the settings', 'Change the address'],
  ['Run the sensor'],
]

function Browser() {
  return (
    <section className={`${frame} top-[23px] right-[180px] bottom-[43px] left-[23px] p-[3px]`}>
      <TitleBar icon={<Ie page />}>Hedgehog Enterprise Edition - Windows Internet Explorer</TitleBar>
      <nav className={`${bar} h-[24px] gap-[17px] pl-[9px] text-[#786058]`}>
        {['File', 'Edit', 'View', 'Favorites'].map((m) => (
          <button key={m} type="button">{m}</button>
        ))}
      </nav>
      <div className={`${bar} h-[33px] pl-1`}>
        <button type="button" className="flex items-center gap-[5px]">
          <I size={23} box={23}>
            <circle cx="11.500" cy="11.500" r="10.500" fill="#38a828" stroke="#207818" />
            <path d="M12 5l-6 6.500L12 18M7 11.500h11" stroke="#fff" strokeWidth="3" />
          </I>
          Back
        </button>
        <span className="mr-2 ml-[9px]"><Caret /></span>
        <button type="button" aria-label="Forward">
          <I size={23} box={23}>
            <circle cx="11.500" cy="11.500" r="10.500" fill="#908880" stroke="#787068" />
            <path d="M11 5l6 6.500-6 6.500M16 11.500H5" stroke="#d0c8c0" strokeWidth="3" />
          </I>
        </button>
        <span className="mr-2 ml-2"><Caret dim /></span>
        <button type="button" aria-label="Stop">
          <I size={22} box={22}>
            <path d="M2 1h14l4 4v16H2z" fill="#e8f0fc" stroke="#6898d8" />
            <path d="M7 8l7 7M14 8l-7 7" stroke="#e83810" strokeWidth="3" />
          </I>
        </button>
        <button type="button" aria-label="Refresh" className="ml-[10px]">
          <I size={22} box={22}>
            <path d="M1 1h14l4 4v16H1z" fill="#e8f0fc" stroke="#6898d8" />
            <path d="M5 12l5-5v3h4v3H9v3z" fill="#28a028" />
          </I>
        </button>
      </div>
      <div className={`${bar} h-[23px] pl-[5px]`}>
        <label htmlFor="address" className="w-[43px]">Address</label>
        <div className="flex h-[19px] flex-1 items-center border border-t-black border-l-black border-r-[#d8d0c8] border-b-[#d8d0c8] bg-[#d8d0c8] pl-px">
          <Ie page />
          <input
            id="address"
            defaultValue="https://127.0.0.1:8443/console"
            className="min-w-0 flex-1 bg-transparent pl-[3px] text-[12px] outline-none"
          />
        </div>
      </div>
      <div className={`${bar} h-[27px] pl-[2px]`}>
        <span className="w-[76px] font-['Open_Sans',sans-serif] text-[20px] leading-6 font-bold text-[#282020]">Norton</span>
        <span className="relative flex h-[19px] w-[180px] items-center bg-linear-to-b from-[#88d820] to-[#389808] pl-[24px] font-['Open_Sans',sans-serif] text-[11px] font-bold whitespace-nowrap text-white">
          <span className="absolute -top-px -left-px"><Tick fill="#f0a820" stroke="#303030" size={22} /></span>
          Phishing Protection
        </span>
      </div>
      <div className={`${bar} h-[26px] pl-[4px]`}>
        <span className="w-[53px] font-['Liberation_Serif',serif] text-[17px] leading-5">
          <span className="text-[#2860e0]">G</span>
          <span className="text-[#e03020]">o</span>
          <span className="text-[#e8b010]">o</span>
          <span className="text-[#2860e0]">g</span>
          <span className="text-[#28a030]">l</span>
          <span className="text-[#e03020]">e</span>
        </span>
        <span className={`flex h-[22px] w-[120px] items-center gap-px bg-[#d8d0c8] pl-[2px] ${sunken}`}>
          <span className="flex h-4 w-4 items-center justify-center border border-[#6890d8] bg-white font-['Liberation_Serif',serif] text-[15px] leading-none font-bold text-[#2858c8]">
            G
          </span>
          <Caret />
        </span>
      </div>
      <div className={`${bar} h-[24px]`}>
        <span className="flex h-full w-[76px] items-center bg-linear-to-b from-[#f0f4fc] to-[#c0d0e8] pl-1 font-['Open_Sans',sans-serif] text-[13px] font-bold text-black">
          <I box={16} className="mr-px">
            <circle cx="8" cy="8" r="7" fill="#000" stroke="#0818c8" strokeWidth="1.500" />
            <path d="M5 6c1-2 5-2 5 .5V12M10 8C6 8 5 9 5 10.500S8 12.500 10 10" stroke="#fff" strokeWidth="1.600" />
          </I>
          Alexa
          <span className="ml-[6px]"><Caret /></span>
        </span>
        <span className="h-[20px] flex-1 border border-[#a0a0a8] bg-[#d8d0c8]" />
      </div>
      <div className="mt-[2px] flex min-h-0 flex-1 border border-t-black border-l-black border-r-[#d8d0c8] border-b-[#d8d0c8] bg-white font-['Liberation_Sans',Arial,sans-serif]">
        <div className="flex min-w-0 flex-1 flex-col">
          <div className="flex min-h-0 flex-1 overflow-hidden">
            <div className="h-[54px] w-[46px] shrink-0 bg-linear-to-b from-[#f6f6e0] to-white" />
            <article className="w-[300px] shrink-0 pt-[2px] pl-[23px] text-[#304858]">
              <div className="pl-[4px] text-[12px] leading-4">
                <p>To start using the product while<br />no sensors are installed</p>
                <p className="mt-[9px]">To install a sensor</p>
                <p className="mt-[9px]">You will need:</p>
                <p className="mt-4">1. The download file<br />2. Root access to the server</p>
                <p className="mt-[9px] text-[11px]">
                  <a href="#instructions" className="text-[#1878a8]">Click here for instructions</a>
                </p>
              </div>
              <div className="mt-[17px] h-[239px] w-[400px] bg-[#f5f7f9] pt-[13px] pl-[15px] leading-4">
                <b>Installation instructions</b>
                <ol className="mt-[19px] pl-[18px]">
                  {steps.map((lines, i) => (
                    <li key={i} className="flex">
                      <span className="w-[22px]">{i + 1}.</span>
                      <span>
                        {lines.map((l, j) => (
                          <span key={j} className="block">{l}</span>
                        ))}
                      </span>
                    </li>
                  ))}
                </ol>
              </div>
              <p className="pl-[4px] leading-4"><a href="#trouble" className="text-[#1878a8]">Click here for troubleshooting</a></p>
              <p className="mt-4 pl-px leading-4"><a href="#skip" className="text-[#1878a8]">I do not want to install a sensor</a></p>
            </article>
          </div>
          <p className="shrink-0 pr-[60px] text-right leading-[14px] text-[#8898a0]">
            (c)2007 Sentrigo LTD. All rights reserved -{' '}
            <a href="#license" className="text-[#1878a8]">License</a>
          </p>
          <div className="mr-[57px] h-[3px] shrink-0 bg-linear-to-r from-white from-50% to-[#c8d820] to-90%" />
        </div>
        <div className={`flex w-[14px] flex-col justify-end ${checker}`}>
          <div className={`h-[500px] ${raised}`} />
          <ArrowButton dir="down" className="h-[14px] w-[14px]" />
        </div>
      </div>
      <footer className="mt-[2px] flex h-[19px] shrink-0 gap-[2px]">
        <span className={`flex flex-1 items-center ${sunken}`}><Ie page /></span>
        <span className={`w-[22px] ${sunken}`} />
        <span className={`w-[22px] ${sunken}`} />
        <span className={`w-[22px] ${sunken}`} />
        <span className={`w-[22px] ${sunken}`} />
        <span className={`flex w-[22px] items-center justify-center ${sunken}`}><Lock /></span>
        <span className={`flex w-[145px] items-center gap-[4px] pl-px ${sunken}`}>
          <Globe />
          Internet
          <span className="flex-1" />
          <SizeGrip />
        </span>
      </footer>
    </section>
  )
}

/* ---------- Paint ---------- */

const paintTools = [
  <path d="M2 4l5 2 4-4v12l-4-3-5 2 2-4z" stroke="#000" strokeDasharray="2 1" />,
  <path d="M1 10l7-7h6l-6 8H2z" fill="#f0f060" stroke="#000" />,
  <path d="M3 11l8-9 3 2-8 8zM1 14h10" fill="#fff" stroke="#087878" />,
  <path d="M4 13l1-4 7-8 2 2-7 8z" fill="#e02020" stroke="#000" />,
  <path d="M1 3h6M1 6h5M2 9h4M9 4l5 2v8H9z" stroke="#0810a0" strokeWidth="1.500" />,
  <path d="M1 3l12 10" stroke="#000" />,
  <path d="M1 3h14v9H1z" fill="#c0c0c0" stroke="#000" />,
  <path d="M1 8c0-5 14-5 14 0s-14 5-14 0z" fill="#c0c0c0" stroke="#000" />,
]

const Tube = () => (
  <span className="flex h-[22px] w-5 items-center border border-black bg-[#f8f800] pl-[2px]">
    <I size={14} box={14}>
      <path d="M1 2h9v11H1z" fill="#1010d0" />
      <path d="M3 1h5M3 13h5" stroke="#000" />
      <path d="M3.500 3v9" stroke="#fff" />
    </I>
  </span>
)

function Paint() {
  return (
    <section className={`${frame} top-0 right-[110px] bottom-[52px] left-0 p-[3px]`}>
      <TitleBar icon={<PaintCup />}>untitled - Paint</TitleBar>
      <nav className="flex h-5 shrink-0 items-center border-b border-[#786058] pl-[6px] text-[#786058]">
        <button type="button">File</button>
      </nav>
      <div className="min-h-0 flex-1 border-t border-[#d8d0c8] pt-[4px] pl-[3px]">
        <div className="w-[50px]">
          {paintTools.map((tool, i) => (
            <button
              key={i}
              type="button"
              aria-label={`Tool ${i + 1}`}
              className={`flex h-[25px] w-[25px] items-center justify-center ${raised}`}
            >
              <I>{tool}</I>
            </button>
          ))}
          <div className={`mt-[5px] ml-1 w-[40px] ${sunken}`}>
            <div className="bg-[#008080] p-[3px]"><Tube /></div>
            <div className="p-[3px] pt-[5px] pb-1"><Tube /></div>
          </div>
        </div>
      </div>
      <div className="flex h-[48px] shrink-0 items-center border-t border-[#786058]">
        <div className={`h-[30px] w-[30px] p-1 ${sunken} ${checker}`}>
          <div className="h-3 w-[14px] bg-black" />
          <div className="ml-2 h-2 w-3 border border-[#786058] bg-white" />
        </div>
      </div>
      <footer className="flex h-[26px] shrink-0 items-end gap-[2px] border-t border-[#786058] pt-[3px]">
        <span className={`h-full flex-1 pt-[5px] pl-[2px] ${sunken}`}>For Help, click Help Topics on the Help Menu.</span>
        <SizeGrip />
      </footer>
    </section>
  )
}

/* ---------- windows at the back ---------- */

function Backdrop() {
  return (
    <div className="absolute inset-x-0 top-0 bottom-8 flex flex-col bg-[#a89890]">
      <div className="flex h-[18px] shrink-0 items-center justify-end bg-[#a89870] pr-[2px]">
        <CaptionButtons middle="restore" />
      </div>
      <div className="flex h-[19px] shrink-0 items-center justify-end bg-[#a89870] pr-[2px]">
        <CaptionButtons middle="restore" />
      </div>
      <div className="flex min-h-0 flex-1 justify-end">
        <div className="flex w-[13px] flex-col">
          <div className="mt-1 mb-1 h-[27px] border border-[#c04848] bg-linear-to-br from-[#f88888] to-[#ffb0b0]" />
          <ArrowButton dir="right" className="h-[14px] w-[13px]" />
          <ArrowButton dir="up" className="h-[13px] w-[13px]" />
          <div className={`flex-[86] ${checker}`} />
          <div className={`h-[13px] ${raised}`} />
          <div className={`flex-[534] ${checker}`} />
          <ArrowButton dir="down" className="h-[13px] w-[13px]" />
        </div>
      </div>
      <div className="flex h-[26px] shrink-0 items-center border-t border-[#d8d0c8] pl-3">
        <I>
          <path d="M1 1h14v10H1z" fill="#181818" />
          <path d="M4 1h7v8H4z" fill="#e8f0f8" />
          <path d="M5 3h5M5 5h5M5 7h5" stroke="#98a8b8" />
          <path d="M3 13h10" stroke="#887870" strokeWidth="2" />
        </I>
        <I size={13} box={13} className="ml-[17px]">
          <path d="M0 5h13v7H0z" fill="#e0e8f4" />
          <path d="M4 5h5v3H4z" fill="#3858a0" />
        </I>
        <span className="flex-1" />
        <div className="flex items-center gap-[2px] pr-[4px]">
          {[
            'M1 0h13v15H1z',
            'M1 0h13v6H1zM1 9h13v6H1z',
            'M1 0h5v6H1zM9 0h5v6H9zM1 9h5v6H1zM9 9h5v6H9z',
            'M0 2h6v11H0zM8 2h6v11H8z',
          ].map((d, i) => (
            <button
              key={d}
              type="button"
              aria-label={`View ${i + 1}`}
              className={`flex h-[21px] items-center justify-center ${i === 1 ? 'w-[31px] border border-[#d8d0c8] bg-[#b8aca4]' : 'w-[30px]'}`}
            >
              <I>
                <path d={d} fill="#d8e8f8" stroke="#88a8d0" />
              </I>
            </button>
          ))}
        </div>
      </div>
    </div>
  )
}

function DocWindow() {
  return (
    <section className={`${frame} top-[35px] right-[13px] bottom-[63px] left-[700px] p-[3px]`}>
      <TitleBar />
      <div className="mt-[2px] h-[24px] shrink-0 border-b border-[#786058] bg-white" />
      <div className="h-[33px] shrink-0 border-b border-[#786058]" />
      <div className="h-[25px] shrink-0 border-b border-[#d8d0c8]" />
      <div className="mt-[15px] flex min-h-0 flex-1 flex-col border-t border-black bg-[#d8d0c8]">
        <div className="flex-1" />
        <HScroll thumb={98} />
      </div>
    </section>
  )
}

function ConsoleWindow() {
  return (
    <section className={`${frame} right-[505px] bottom-8 left-[111px] h-[200px] p-[3px]`}>
      <div className="flex flex-1 items-end justify-end bg-black">
        <ArrowButton dir="right" />
      </div>
    </section>
  )
}

/* ---------- taskbar ---------- */

const tasks = [
  [<Ie />, <><b>8</b> Internet E...</>, true],
  [<ExplorerIcon />, 'sentrigo'],
  [<TextPadIcon />, 'TextPad - [C:\\...'],
  [<Thunderbird />, 'oaktable - Th...'],
  [<Thunderbird />, 'Your account ...'],
  [<Cmd />, 'C:\\WINDOW...'],
  [<Adobe />, 'Adobe Reade...'],
  [<PaintCup />, 'untitled - Paint'],
]

const BarSep = () => <span className={`h-[22px] w-[3px] shrink-0 ${raised}`} />

function Taskbar() {
  return (
    <footer className="absolute inset-x-0 bottom-0 flex h-8 items-center bg-[#a89890] pr-[2px] pb-[2px] pl-[2px] shadow-[inset_0_1px_#a89890,inset_0_2px_#d8d0c8]">
      <button
        type="button"
        className={`flex h-[22px] w-[50px] shrink-0 items-center gap-[2px] pl-px font-['Liberation_Sans',Arial,sans-serif] text-[12px] font-bold ${raised}`}
      >
        <Flag />
        Start
      </button>
      <span className="w-[7px] shrink-0" />
      <BarSep />
      <div className="mr-[10px] ml-[4px] flex min-w-0 flex-1 gap-[3px]">
        {tasks.map(([icon, text, menu], i) => (
          <button key={i} type="button" className={`flex h-[22px] min-w-0 flex-1 items-center gap-[4px] pl-1 ${raised}`}>
            {icon}
            <span className="whitespace-nowrap">{text}</span>
            {menu && <span className="ml-auto pr-[3px]"><Caret /></span>}
          </button>
        ))}
        <button
          type="button"
          className={`flex h-[22px] min-w-0 flex-1 items-center gap-1 border border-t-black border-l-black border-r-[#d8d0c8] border-b-[#d8d0c8] pl-1 text-[12px] font-bold ${checker}`}
        >
          <WinScpIcon />
          <span className="whitespace-nowrap">2% Copying...</span>
        </button>
      </div>
      <BarSep />
      <span className="mx-[8px] flex h-4 w-3 shrink-0 items-center overflow-hidden bg-[#008080] text-[#d8d0c8]">EN</span>
      <button
        type="button"
        className="ml-[-5px] flex h-[26px] w-[81px] shrink-0 items-center gap-[4px] self-end bg-linear-to-b from-[#ffd820] via-[#f8a810] to-[#ffe860] pl-1 text-[12px] font-bold text-[#302810]"
      >
        <Tick fill="#28a828" size={22} />
        Norton™
      </button>
      <div className={`ml-[2px] flex h-[26px] w-[130px] shrink-0 items-center self-end pr-[6px] pl-1 ${sunken}`}>
        <button type="button" aria-label="Show hidden icons" className="w-[13px] text-[13px] font-bold">«</button>
        <I>
          <path d="M1 3h9v7H1z" fill="#a8e0f8" stroke="#2878b0" />
          <path d="M4 12h6M3 14h8" stroke="#d8d8d8" strokeWidth="1.500" />
          <path d="M11 4c2 2 2 4 0 6M13.500 2c2 3 2 7 0 10" stroke="#38b028" strokeWidth="1.300" />
        </I>
        <I className="ml-[3px]">
          <path d="M1 1l9 6 3 6-6-2z" fill="#a8b8c8" stroke="#283848" />
          <path d="M10 10l5 3M5 3l-3-2M8 12l1 3" stroke="#283848" strokeWidth="2" />
        </I>
        <I className="ml-[2px]">
          <rect x="2" y="0" width="12" height="16" rx="5" fill="#1030d8" />
          <path d="M5 5l6 6-3 2.500v-11L11 5l-6 6" stroke="#fff" strokeWidth="1.200" />
        </I>
        <I className="ml-[2px]">
          <circle cx="7" cy="7" r="6" fill="#888" stroke="#404040" />
          <circle cx="7" cy="7" r="2.500" fill="#e0e0e0" stroke="#505050" />
          <path d="M12 14c2-1 3-3 3-5" stroke="#b0a8e0" />
        </I>
        <time className="ml-auto">13:44</time>
      </div>
    </footer>
  )
}

function App() {
  return (
    <main className="relative h-screen w-full overflow-hidden bg-[#a89890] font-[Roboto,'Liberation_Sans',sans-serif] text-[11px] leading-[13px] text-black">
      <Backdrop />
      <ConsoleWindow />
      <DocWindow />
      <Paint />
      <Browser />
      <WinScp />
      <CopyDialog />
      <Taskbar />
    </main>
  )
}

export default App
